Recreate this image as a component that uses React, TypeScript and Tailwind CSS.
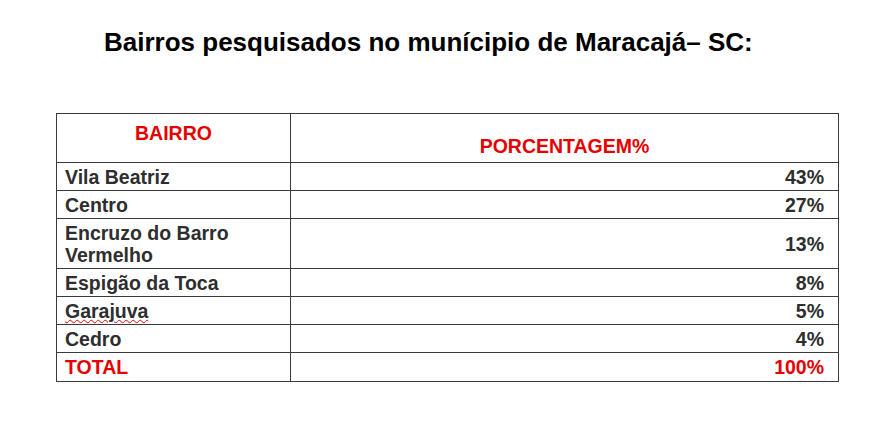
const rows: { name: string; pct: string; tall?: boolean; misspelled?: boolean }[] = [
  { name: "Vila Beatriz", pct: "43%" },
  { name: "Centro", pct: "27%" },
  { name: "Encruzo do Barro Vermelho", pct: "13%", tall: true },
  { name: "Espigão da Toca", pct: "8%" },
  { name: "Garajuva", pct: "5%", misspelled: true },
  { name: "Cedro", pct: "4%" },
];

export default function App() {
  return (
    <div className="w-[895px] h-[421px] bg-white font-['Liberation_Sans',Arial,sans-serif] overflow-hidden">
      <h1 className="ml-[104px] pt-[27px] text-[26px] leading-[30px] font-bold text-black">
        Bairros pesquisados no munícipio de Maracajá– SC:
      </h1>

      <table className="ml-[56px] mt-[56px] w-[783px] border-collapse text-[19.5px] font-bold leading-[22px] text-[#2e2e2e]">
        <tbody>
          <tr className="h-[49px]">
            <td className="w-[234px] border border-[#3a3a3a] align-top pt-[8px] text-center text-[#e60000]">
              BAIRRO
            </td>
            <td className="border border-[#3a3a3a] align-bottom pb-[5px] text-center text-[#e60000]">
              PORCENTAGEM%
            </td>
          </tr>
          {rows.map((r) => (
            <tr key={r.name} className={r.tall ? "h-[50px]" : "h-[28px]"}>
              <td className="border border-[#3a3a3a] pl-[8px] pr-[30px] align-middle">
                {r.misspelled ? (
                  <span className="underline decoration-wavy decoration-[#e60000] decoration-1 underline-offset-[1px]">
                    {r.name}
                  </span>
                ) : (
                  r.name
                )}
              </td>
              <td className="border border-[#3a3a3a] pr-[14px] text-right align-middle">{r.pct}</td>
            </tr>
          ))}
          <tr className="h-[29px]">
            <td className="border border-[#3a3a3a] pl-[8px] align-middle text-[#e60000]">TOTAL</td>
            <td className="border border-[#3a3a3a] pr-[14px] text-right align-middle text-[#e60000]">100%</td>
          </tr>
        </tbody>
      </table>
    </div>
  );
}
